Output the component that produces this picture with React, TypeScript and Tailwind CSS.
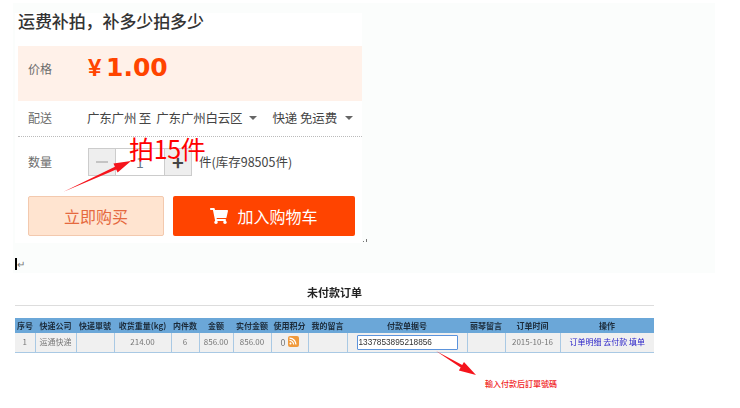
import { FaRss, FaShoppingCart } from "react-icons/fa";

const cjk = "font-['Noto_Sans_CJK_SC','Liberation_Sans',sans-serif]";

const columns = [
  { title: "序号", width: 20, value: "1" },
  { title: "快递公司", width: 41, value: "运通快递" },
  { title: "快递單號", width: 38, value: "" },
  { title: "收货重量(kg)", width: 57, value: "214.00" },
  { title: "内件数", width: 28, value: "6" },
  { title: "金额", width: 34, value: "856.00" },
  { title: "实付金额", width: 38, value: "856.00" },
  { title: "使用积分", width: 37, value: "0" },
  { title: "我的留言", width: 39, value: "" },
  { title: "付款单据号", width: 120, value: "" },
  { title: "丽琴留言", width: 38, value: "" },
  { title: "订单时间", width: 55, value: "2015-10-16" },
  { title: "操作", width: 94, value: "" },
];

const Arrow = ({ x1, y1, x2, y2, className }: { x1: number; y1: number; x2: number; y2: number; className: string }) => {
  // thin tail that widens into a solid head
  const a = Math.atan2(y2 - y1, x2 - x1);
  const hx = x2 - 17 * Math.cos(a);
  const hy = y2 - 17 * Math.sin(a);
  const n = (r: number, s: number) => `${hx + s * r * Math.sin(a)},${hy - s * r * Math.cos(a)}`;
  return (
    <svg className={className} width="740" height="408" viewBox="0 0 740 408">
      <polygon points={`${x1},${y1} ${n(1.5, 1)} ${n(5, 1)} ${x2},${y2} ${n(5, -1)} ${n(1.5, -1)}`} fill="#f5141c" />
    </svg>
  );
};

const App = () => {
  return (
    <div className={`relative w-[740px] h-[408px] overflow-hidden bg-white pt-[3px] pl-[13px] ${cjk}`}>
      <div className="w-[702px] h-[270px] bg-[#fbfdfc] pt-[10px] pl-[2px]">
        <div className="w-[347px] h-[230px] bg-white">
          <h1 className="pl-[3px] h-[33px] text-[17px] leading-[16px] font-medium text-[#333] tracking-[-0.1px]">
            运费补拍，补多少拍多少
          </h1>
          <div className="ml-[3px] h-[55px] bg-[#fff1e9] flex pt-[8px] text-[#ff4400]">
            <span className="w-[70px] pl-[10px] pt-[6px] text-[12px] leading-[18px] text-[#6c6c6c]">价格</span>
            <span className="text-[24px] leading-[28px] font-['Liberation_Sans',sans-serif] font-bold w-[19px]">¥</span>
            <span className="text-[25px] leading-[28px] font-['DejaVu_Sans',sans-serif] font-bold ml-[-1px]">1.00</span>
          </div>
          <div className="ml-[3px] h-[36px] flex items-center border-b border-dotted border-[#bbb] text-[12.5px] text-[#444] pb-[1px]">
            <span className="w-[70px] pl-[10px] text-[#6c6c6c] text-[12px]">配送</span>
            <span className="tracking-[-0.2px] ml-[-1px]">广东广州 至&nbsp; 广东广州白云区</span>
            <span className="ml-[7px] border-x-4 border-t-4 border-x-transparent border-t-[#666]" />
            <span className="ml-[15px] tracking-[-0.1px]">快递 免运费</span>
            <span className="ml-[8px] border-x-4 border-t-4 border-x-transparent border-t-[#666]" />
          </div>
          <div className="ml-[3px] flex items-start pt-[11px] h-[50px] text-[#555]">
            <span className="w-[70px] pl-[10px] text-[12px] leading-[28px] text-[#6c6c6c]">数量</span>
            <div className="flex h-[28px] border border-[#ccc] text-[#666]">
              <span className="w-[26px] bg-[#eeeeee] flex items-center justify-center">
                <span className="w-[12px] h-[2px] bg-[#c4c4c4]" />
              </span>
              <span className="w-[50px] border-x border-[#ccc] text-center text-[14px] leading-[26px] text-[#6a7a88]">1</span>
              <span className="w-[26px] bg-[#eeeeee] flex items-center justify-center text-[20px] font-bold text-[#444] leading-none">+</span>
            </div>
            <span className="ml-[7px] text-[12.5px] leading-[28px] text-[#444]">件(库存98505件)</span>
          </div>
          <div className="ml-[13px] mt-[9px] flex gap-[9px]">
            <div className="w-[136px] h-[40px] rounded-[2px] bg-[#ffe4d0] border border-[#f3c9ae] flex items-center justify-center text-[16px] text-[#e5693f]">
              立即购买
            </div>
            <div className="w-[182px] h-[40px] rounded-[2px] bg-[#ff4400] flex items-center justify-center gap-[9px] text-[16px] text-white">
              <FaShoppingCart className="w-[18px] h-[16px]" />
              <span>加入购物车</span>
            </div>
          </div>
        </div>
        <div className="h-[15px] pt-[15px] flex items-start">
          <span className="w-[2px] h-[12px] bg-black" />
          <span className="text-[10px] leading-[10px] text-[#777] mt-[1px]">↵</span>
        </div>
      </div>

      <div className="ml-[2px] w-[639px] blur-[0.3px]">
        <div className="mt-[12px] h-[21px] border-b border-[#ddd] pb-[4px] text-center text-[11px] leading-[15px] font-bold text-[#222] mb-[12px]">
          未付款订单
        </div>
        <table className="w-[639px] table-fixed border-collapse text-[8px] text-center">
          <colgroup>
            {columns.map((c) => (
              <col key={c.title} style={{ width: c.width }} />
            ))}
          </colgroup>
          <thead>
            <tr className="h-[15px] bg-[#6ba7d8] text-[#1c2b3a] font-bold">
              {columns.map((c) => (
                <th key={c.title} className="p-0 whitespace-nowrap font-bold leading-[12px]">{c.title}</th>
              ))}
            </tr>
          </thead>
          <tbody>
            <tr className="h-[19px] bg-[#f0f0f0] text-[#777] border-b border-[#a9c9e4]">
              {columns.map((c) => (
                <td key={c.title} className="p-0 border-r border-[#a9c9e4] last:border-r-0 whitespace-nowrap">
                  {c.title === "使用积分" && (
                    <span className="inline-flex items-center gap-[2px] text-[9px]">
                      0
                      <span className="w-[11px] h-[11px] rounded-[2px] bg-[#f09a3c] flex items-center justify-center text-white mb-[2px]">
                        <FaRss className="w-[8px] h-[8px]" />
                      </span>
                    </span>
                  )}
                  {c.title === "付款单据号" && (
                    <div className="mx-[9px] h-[15px] bg-white border border-[#5b93dc] rounded-[1px] text-left pl-[1px] text-[8.25px] leading-[13px] text-[#333] font-['Liberation_Sans',sans-serif]">
                      1337853895218856
                    </div>
                  )}
                  {c.title === "操作" ? (
                    <span className="text-[#2a22c8]">订单明细 去付款 填单</span>
                  ) : c.title !== "使用积分" && c.title !== "付款单据号" ? (
                    c.value
                  ) : null}
                </td>
              ))}
            </tr>
          </tbody>
        </table>
      </div>

      {/* hand drawn notes on top of the shot */}
      <Arrow x1={63} y1={192} x2={131} y2={161} className="absolute left-0 top-0 pointer-events-none" />
      <Arrow x1={436} y1={351} x2={476} y2={375} className="absolute left-0 top-0 pointer-events-none" />
      <span className="absolute left-[129px] top-[132px] text-[25px] leading-[32px] text-[#ff0000] tracking-[-0.3px]">拍15件</span>
      <span className="absolute left-[485px] top-[378px] text-[8px] leading-[12px] text-[#f01c24] font-medium">輸入付款后訂單號碼</span>
      <span className="absolute left-[363px] top-[241px] w-px h-px bg-[#777]" />
      <span className="absolute left-[366px] top-[239px] w-px h-[3px] bg-[#777]" />
    </div>
  );
};

export default App;
